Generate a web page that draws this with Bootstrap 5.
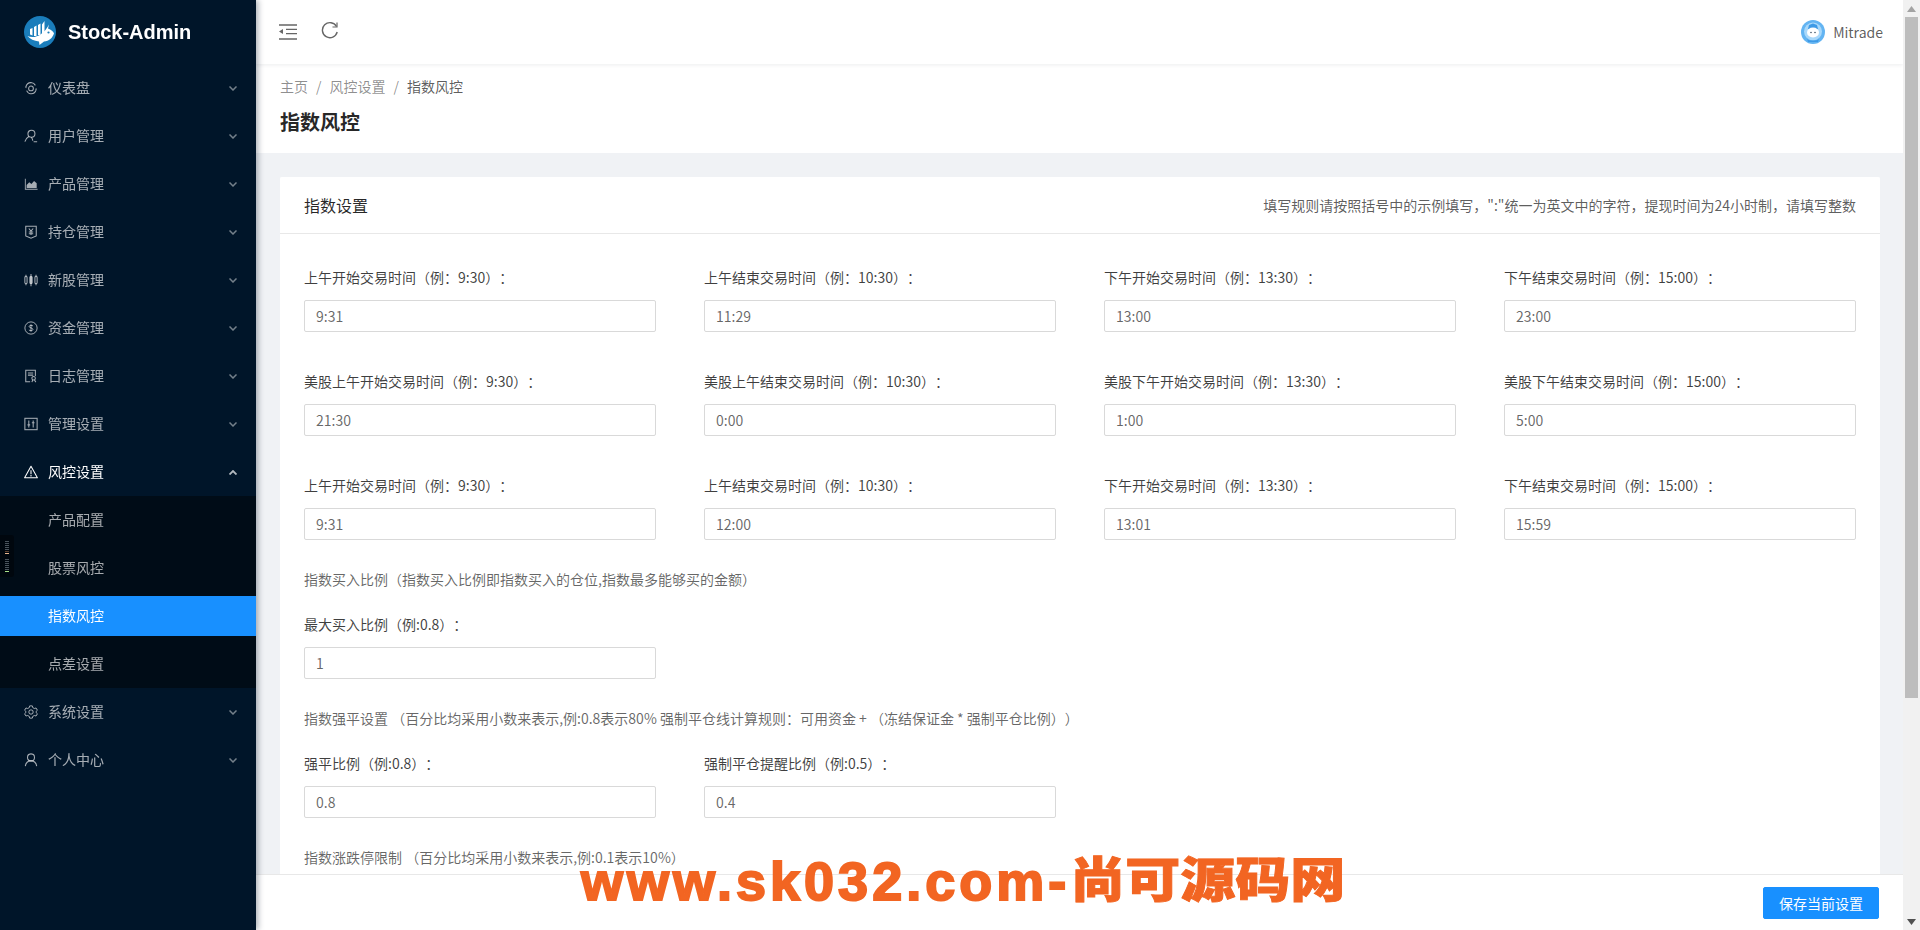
<!DOCTYPE html>
<html lang="zh-CN">
<head>
  <meta charset="UTF-8">
  <title>指数风控 - Stock-Admin</title>
  <link href="https://cdn.jsdelivr.net/npm/bootstrap@5.3.0/dist/css/bootstrap.min.css" rel="stylesheet">
  <style>
    body {
      background: #f0f2f5;
      font-family: "Noto Sans CJK SC", "Liberation Sans", sans-serif;
      font-size: 14px;
      color: rgba(0,0,0,.65);
      text-spacing-trim: space-all;
      overflow: hidden;
    }
    .app-scroll { height: 100vh; overflow-y: auto; scrollbar-width: none; min-width: 0; }
    .bar-rail { width: 17px; height: 100vh; flex-shrink: 0; background: #f1f1f1; }
    .bar-arrow { height: 17px; }
    .bar-thumb { height: 681px; margin: 0 2px; background: #bdbdbd; }
    .side-bar {
      width: 256px;
      height: 100vh;
      flex-shrink: 0;
      background: #001529;
      box-shadow: 2px 0 6px rgba(0,21,41,.35);
      z-index: 20;
    }
    .side-logo { height: 64px; padding-left: 24px; gap: 12px; }
    .side-logo span { font: bold 20px "Liberation Sans", sans-serif; color: #fff; }
    .side-link {
      height: 40px;
      margin: 4px 0;
      padding: 0 19px 0 24px;
      color: rgba(255,255,255,.65);
      line-height: 38px;
    }
    .side-link:hover { color: #fff; }
    .side-ico { width: 14px; height: 14px; margin-right: 10px; flex-shrink: 0; }
    .side-text { flex-grow: 1; padding-bottom: 2px; }
    .side-open { color: #fff; }
    .side-sub { background: #000c17; }
    .side-sub .side-link { padding-left: 48px; }
    .side-sel, .side-sel:hover { background: #1890ff; color: #fff; }
    .side-chev { width: 8px; height: 5px; opacity: .7; }
    .side-meter { position: absolute; left: 0; top: 535px; width: 14px; height: 42px; background: #00070e; border-radius: 0 3px 3px 0; }
    .main-wrap { min-width: 0; }
    .top-bar {
      height: 64px;
      padding: 0 20px 0 23px;
      background: #fff;
      box-shadow: 0 1px 4px rgba(0,21,41,.08);
      position: relative;
      z-index: 5;
    }
    .top-refresh { margin-bottom: 4px; }
    .top-name { margin-left: 8px; }
    .page-head { height: 89px; padding: 10px 24px 0; background: #fff; }
    .page-head .breadcrumb { margin: 0; line-height: 24px; --bs-breadcrumb-divider-color: rgba(0,0,0,.45); --bs-breadcrumb-item-padding-x: 8px; }
    .page-head .breadcrumb-item a { color: rgba(0,0,0,.45); text-decoration: none; }
    .page-head .breadcrumb-item.active { color: rgba(0,0,0,.65); }
    .page-title { margin: 8px 0 0; font-size: 20px; line-height: 32px; font-weight: 600; color: rgba(0,0,0,.85); }
    .page-body { padding: 24px 23px 75px 24px; }
    .set-card { border: 0; border-radius: 2px; }
    .set-card .card-header {
      height: 57px;
      padding: 0 24px;
      background: #fff;
      border-bottom: 1px solid #e8e8e8;
      border-radius: 2px 2px 0 0;
    }
    .set-title { font-size: 16px; color: rgba(0,0,0,.85); }
    .set-card .card-body { padding: 33px 24px 24px; }
    .item-label { display: block; height: 22px; line-height: 20px; margin-bottom: 11px; color: rgba(0,0,0,.75); }
    .item-input {
      height: 32px;
      padding: 4px 11px;
      font-size: 14px;
      color: rgba(0,0,0,.6);
      border: 1px solid #d9d9d9;
      border-radius: 2px;
    }
    .set-row { margin-bottom: 39px; }
    .set-row.tight { margin-bottom: 29px; }
    .set-note { height: 22px; line-height: 20px; margin-bottom: 23px; color: rgba(0,0,0,.6); }
    .foot-bar {
      position: fixed;
      left: 256px;
      right: 17px;
      bottom: 0;
      height: 56px;
      padding-right: 24px;
      background: #fff;
      border-top: 1px solid #e8e8e8;
      z-index: 10;
    }
    .foot-bar .btn {
      height: 32px;
      padding: 0 15px;
      font-size: 14px;
      line-height: 30px;
      background: #1890ff;
      border-color: #1890ff;
      border-radius: 2px;
    }
    .mark-text {
      position: fixed;
      left: 581px;
      top: 839px;
      z-index: 30;
      font: 900 54px/74px "Liberation Sans", "Noto Sans CJK SC", sans-serif;
      color: #f26522;
      letter-spacing: 4px;
      white-space: nowrap;
      -webkit-text-stroke: 2px #f26522;
    }
    .mark-text b { display: inline-block; letter-spacing: 0; font-size: 55px; font-weight: 900; font-family: "Noto Sans CJK SC", sans-serif; transform: scaleY(.86); -webkit-text-stroke: 1px #f26522; }
  </style>
</head>
<body class="d-flex">

<div class="app-scroll flex-grow-1" id="appScroll">
<div class="d-flex">
  <aside class="side-bar sticky-top">
    <div class="side-logo d-flex align-items-center">
      <svg width="32" height="32" viewBox="0 0 32 32">
        <circle cx="16" cy="16" r="16" fill="#1a7dbb"/>
        <path d="M6 13 8.500 12V19.500L6 18.500ZM10 11 12.500 9.500V20H10ZM14 9 16.500 7.500V19H14ZM18 8.500 20.500 5V16L18 18Z" fill="#fff"/>
        <path d="M3.500 20C10 23 19 20 25 8.500L24 12.500C27 13.500 29.500 15.500 30 17.500 28.500 22 25 25 20 25.500L15.500 29 15 25.500C10 25 6 23 3.500 20Z" fill="#fff"/>
        <circle cx="24.500" cy="16.500" r="1.100" fill="#1a7dbb"/>
      </svg>
      <span>Stock-Admin</span>
    </div>
    <nav class="nav flex-column">
      <a class="side-link d-flex align-items-center text-decoration-none" href="#">
        <svg class="side-ico" viewBox="0 0 16 16" fill="none" stroke="currentColor" stroke-width="1.200"><circle cx="8" cy="8.500" r="2.700"/><path d="M2 7C3 3.500 6 1.500 9 2M2.500 6 2 8M14 9.500C13 13 10 15 7 14.500M13.500 10.500 14 8.500M3 11C4.500 14 6 14.500 7.500 14.500M13 5C11.500 2.500 10 2 9 2"/></svg>
        <span class="side-text">仪表盘</span>
        <svg class="side-chev" viewBox="0 0 8 5" fill="none" stroke="currentColor" stroke-width="1.500"><path d="M.5.500 4 4 7.500.5"/></svg>
      </a>
      <a class="side-link d-flex align-items-center text-decoration-none" href="#">
        <svg class="side-ico" viewBox="0 0 16 16" fill="none" stroke="currentColor" stroke-width="1.200"><circle cx="8.500" cy="5.500" r="4"/><path d="M5.500 8.500C3 10 1.500 12 1 14.500M8.500 9.500C9.500 11 10 12.500 10 13.500M11 14.500H15"/></svg>
        <span class="side-text">用户管理</span>
        <svg class="side-chev" viewBox="0 0 8 5" fill="none" stroke="currentColor" stroke-width="1.500"><path d="M.5.500 4 4 7.500.5"/></svg>
      </a>
      <a class="side-link d-flex align-items-center text-decoration-none" href="#">
        <svg class="side-ico" viewBox="0 0 16 16"><path d="M1 2V14.500H15.500V13.500H2V2Z" fill="currentColor"/><path d="M3 12.500V9L6 6 8.500 8 11.500 4.500 14.500 7V12.500Z" fill="currentColor"/></svg>
        <span class="side-text">产品管理</span>
        <svg class="side-chev" viewBox="0 0 8 5" fill="none" stroke="currentColor" stroke-width="1.500"><path d="M.5.500 4 4 7.500.5"/></svg>
      </a>
      <a class="side-link d-flex align-items-center text-decoration-none" href="#">
        <svg class="side-ico" viewBox="0 0 16 16" fill="none" stroke="currentColor" stroke-width="1.200"><path d="M2 1.500H14V12.500L8 15 2 12.500Z"/><path d="M5.500 4 8 7 10.500 4M8 7V11.500M5.500 8H10.500M5.500 10H10.500"/></svg>
        <span class="side-text">持仓管理</span>
        <svg class="side-chev" viewBox="0 0 8 5" fill="none" stroke="currentColor" stroke-width="1.500"><path d="M.5.500 4 4 7.500.5"/></svg>
      </a>
      <a class="side-link d-flex align-items-center text-decoration-none" href="#">
        <svg class="side-ico" viewBox="0 0 16 16" fill="none" stroke="currentColor" stroke-width="1.200"><rect x="1" y="4" width="2.500" height="8" rx="1"/><rect x="6.750" y="4" width="2.500" height="8" rx="1" fill="currentColor"/><rect x="12.500" y="4" width="2.500" height="8" rx="1"/><path d="M2.250 2V4M2.250 12V14M8 1V4M8 12V15M13.750 2V4M13.750 12V14"/></svg>
        <span class="side-text">新股管理</span>
        <svg class="side-chev" viewBox="0 0 8 5" fill="none" stroke="currentColor" stroke-width="1.500"><path d="M.5.500 4 4 7.500.5"/></svg>
      </a>
      <a class="side-link d-flex align-items-center text-decoration-none" href="#">
        <svg class="side-ico" viewBox="0 0 16 16" fill="none" stroke="currentColor" stroke-width="1.100"><circle cx="8" cy="8" r="7"/><path d="M10.300 5.700C9.500 4.800 6 4.500 5.900 6.300 5.800 8.200 10.300 7.600 10.200 9.700 10.100 11.400 6.500 11.300 5.600 10.200M8 3.800V12.200"/></svg>
        <span class="side-text">资金管理</span>
        <svg class="side-chev" viewBox="0 0 8 5" fill="none" stroke="currentColor" stroke-width="1.500"><path d="M.5.500 4 4 7.500.5"/></svg>
      </a>
      <a class="side-link d-flex align-items-center text-decoration-none" href="#">
        <svg class="side-ico" viewBox="0 0 16 16" fill="none" stroke="currentColor" stroke-width="1.200"><path d="M7 14.500H2V1.500H13V8"/><path d="M4.500 4.500H10.500M4.500 7H10.500"/><circle cx="11" cy="10.500" r="2"/><path d="M10 12.500 9 15M12 12.500 13.500 15"/></svg>
        <span class="side-text">日志管理</span>
        <svg class="side-chev" viewBox="0 0 8 5" fill="none" stroke="currentColor" stroke-width="1.500"><path d="M.5.500 4 4 7.500.5"/></svg>
      </a>
      <a class="side-link d-flex align-items-center text-decoration-none" href="#">
        <svg class="side-ico" viewBox="0 0 16 16" fill="none" stroke="currentColor" stroke-width="1.200"><rect x="1" y="1.500" width="14" height="13"/><path d="M5.500 4V12M10.500 4V12M4 9H7M9 6.500H12"/></svg>
        <span class="side-text">管理设置</span>
        <svg class="side-chev" viewBox="0 0 8 5" fill="none" stroke="currentColor" stroke-width="1.500"><path d="M.5.500 4 4 7.500.5"/></svg>
      </a>
      <a class="side-link side-open d-flex align-items-center text-decoration-none" href="#">
        <svg class="side-ico" viewBox="0 0 16 16" fill="none" stroke="currentColor" stroke-width="1.200"><path d="M8 1.500 15.300 14.500H.7Z" stroke-linejoin="round"/><path d="M8 6V10.500M8 11.500V13"/></svg>
        <span class="side-text">风控设置</span>
        <svg class="side-chev" viewBox="0 0 8 5" fill="none" stroke="currentColor" stroke-width="1.800"><path d="M.5 4.500 4 1 7.500 4.500"/></svg>
      </a>
      <div class="side-sub d-flex flex-column">
        <a class="side-link text-decoration-none" href="#">产品配置</a>
        <a class="side-link text-decoration-none" href="#">股票风控</a>
        <a class="side-link side-sel text-decoration-none" href="#">指数风控</a>
        <a class="side-link text-decoration-none" href="#">点差设置</a>
      </div>
      <a class="side-link d-flex align-items-center text-decoration-none" href="#">
        <svg class="side-ico" viewBox="0 0 16 16" fill="none" stroke="currentColor" stroke-width="1.100"><path d="M6.500 1H9.500L10 3 11.800 4 13.800 3.400 15.300 6 13.800 7.400V8.600L15.300 10 13.800 12.600 11.800 12 10 13 9.500 15H6.500L6 13 4.200 12 2.200 12.600.7 10 2.200 8.600V7.400L.7 6 2.200 3.400 4.200 4 6 3Z" stroke-linejoin="round"/><circle cx="8" cy="8" r="2.500"/></svg>
        <span class="side-text">系统设置</span>
        <svg class="side-chev" viewBox="0 0 8 5" fill="none" stroke="currentColor" stroke-width="1.500"><path d="M.5.500 4 4 7.500.5"/></svg>
      </a>
      <a class="side-link d-flex align-items-center text-decoration-none" href="#">
        <svg class="side-ico" viewBox="0 0 16 16" fill="none" stroke="currentColor" stroke-width="1.200"><circle cx="8" cy="5" r="4"/><path d="M1.500 15C2 11.500 4.500 9 8 9S14 11.500 14.500 15"/></svg>
        <span class="side-text">个人中心</span>
        <svg class="side-chev" viewBox="0 0 8 5" fill="none" stroke="currentColor" stroke-width="1.500"><path d="M.5.500 4 4 7.500.5"/></svg>
      </a>
    </nav>
    <div class="side-meter">
      <svg width="14" height="42" viewBox="0 0 14 42">
        <g fill="#4a545c"><rect x="5" y="6" width="4" height="1"/><rect x="5" y="8" width="4" height="1"/><rect x="5" y="10" width="4" height="1"/><rect x="5" y="12" width="4" height="1"/><rect x="5" y="14" width="4" height="1"/><rect x="5" y="24" width="4" height="1"/><rect x="5" y="26" width="4" height="1"/><rect x="5" y="28" width="4" height="1"/><rect x="5" y="30" width="4" height="1"/><rect x="5" y="32" width="4" height="1"/><rect x="5" y="34" width="4" height="1"/></g>
        <rect x="5" y="16" width="4" height="1" fill="#5a4030"/>
        <rect x="5" y="18" width="4" height="1" fill="#e8b48c"/>
        <rect x="5" y="36" width="4" height="1" fill="#a8e088"/>
      </svg>
    </div>
  </aside>

  <div class="main-wrap flex-grow-1">
    <header class="top-bar d-flex align-items-center">
      <svg width="18" height="16" viewBox="0 0 18 16" fill="none" stroke="#666" stroke-width="1.300"><path d="M0 1H18M7 5.300H18M7 9.700H18M0 15H18"/><path d="M0 7.500 4 5V10Z" fill="#666" stroke="none"/></svg>
      <svg class="ms-4 top-refresh" width="18" height="18" viewBox="0 0 18 18" fill="none" stroke="#666" stroke-width="1.400"><path d="M15.500 5.500A7.500 7.500 0 1 0 16.200 11"/><path d="M16 1.500V6H11.500" stroke-width="1.200"/></svg>
      <div class="ms-auto d-flex align-items-center">
        <svg width="24" height="24" viewBox="0 0 24 24">
          <circle cx="12" cy="12" r="12" fill="#63b4f2"/>
          <circle cx="12" cy="11.500" r="9" fill="#a9d8fa"/>
          <path d="M8 5 12 3.500 16 5 17 9H7Z" fill="#3e9ae6"/>
          <ellipse cx="12" cy="12.500" rx="6" ry="5" fill="#fff"/>
          <circle cx="10" cy="12.500" r=".8" fill="#44566a"/>
          <circle cx="14" cy="12.500" r=".8" fill="#44566a"/>
          <path d="M6 19C8 21 16 21 18 19L17 22H7Z" fill="#3e9ae6"/>
        </svg>
        <span class="top-name">Mitrade</span>
      </div>
    </header>

    <div class="page-head">
      <ol class="breadcrumb">
        <li class="breadcrumb-item"><a href="#">主页</a></li>
        <li class="breadcrumb-item"><a href="#">风控设置</a></li>
        <li class="breadcrumb-item active">指数风控</li>
      </ol>
      <h1 class="page-title">指数风控</h1>
    </div>

    <div class="page-body">
      <div class="card set-card">
        <div class="card-header d-flex align-items-center justify-content-between">
          <span class="set-title">指数设置</span>
          <span>填写规则请按照括号中的示例填写，":"统一为英文中的字符，提现时间为24小时制，请填写整数</span>
        </div>
        <div class="card-body">
          <div class="row gx-5 set-row">
            <div class="col-3"><label class="item-label">上午开始交易时间（例：9:30）：</label><input class="form-control item-input" value="9:31"></div>
            <div class="col-3"><label class="item-label">上午结束交易时间（例：10:30）：</label><input class="form-control item-input" value="11:29"></div>
            <div class="col-3"><label class="item-label">下午开始交易时间（例：13:30）：</label><input class="form-control item-input" value="13:00"></div>
            <div class="col-3"><label class="item-label">下午结束交易时间（例：15:00）：</label><input class="form-control item-input" value="23:00"></div>
          </div>
          <div class="row gx-5 set-row">
            <div class="col-3"><label class="item-label">美股上午开始交易时间（例：9:30）：</label><input class="form-control item-input" value="21:30"></div>
            <div class="col-3"><label class="item-label">美股上午结束交易时间（例：10:30）：</label><input class="form-control item-input" value="0:00"></div>
            <div class="col-3"><label class="item-label">美股下午开始交易时间（例：13:30）：</label><input class="form-control item-input" value="1:00"></div>
            <div class="col-3"><label class="item-label">美股下午结束交易时间（例：15:00）：</label><input class="form-control item-input" value="5:00"></div>
          </div>
          <div class="row gx-5 set-row tight">
            <div class="col-3"><label class="item-label">上午开始交易时间（例：9:30）：</label><input class="form-control item-input" value="9:31"></div>
            <div class="col-3"><label class="item-label">上午结束交易时间（例：10:30）：</label><input class="form-control item-input" value="12:00"></div>
            <div class="col-3"><label class="item-label">下午开始交易时间（例：13:30）：</label><input class="form-control item-input" value="13:01"></div>
            <div class="col-3"><label class="item-label">下午结束交易时间（例：15:00）：</label><input class="form-control item-input" value="15:59"></div>
          </div>
          <div class="set-note">指数买入比例（指数买入比例即指数买入的仓位,指数最多能够买的金额）</div>
          <div class="row gx-5 set-row tight">
            <div class="col-3"><label class="item-label">最大买入比例（例:0.8）：</label><input class="form-control item-input" value="1"></div>
          </div>
          <div class="set-note">指数强平设置 （百分比均采用小数来表示,例:0.8表示80% 强制平仓线计算规则：可用资金 + （冻结保证金 * 强制平仓比例））</div>
          <div class="row gx-5 set-row tight">
            <div class="col-3"><label class="item-label">强平比例（例:0.8）：</label><input class="form-control item-input" value="0.8"></div>
            <div class="col-3"><label class="item-label">强制平仓提醒比例（例:0.5）：</label><input class="form-control item-input" value="0.4"></div>
          </div>
          <div class="set-note">指数涨跌停限制 （百分比均采用小数来表示,例:0.1表示10%）</div>
          <div class="row gx-5 set-row tight">
            <div class="col-3"><label class="item-label">最大涨跌幅（例:0.1）：</label><input class="form-control item-input" value="0.1"></div>
          </div>
          <div class="set-note">指数手续费设置 （百分比均采用小数来表示）</div>
          <div class="row gx-5 set-row tight">
            <div class="col-3"><label class="item-label">买入手续费（例:0.001）：</label><input class="form-control item-input" value="0.001"></div>
          </div>
        </div>
      </div>
    </div>
  </div>
</div>
</div>

<div class="bar-rail d-flex flex-column">
  <div class="bar-arrow d-flex align-items-center justify-content-center">
    <svg width="9" height="6" viewBox="0 0 9 6"><path d="M4.500 0 9 6H0Z" fill="#a3a3a3"/></svg>
  </div>
  <div class="bar-thumb" id="barThumb"></div>
  <div class="flex-grow-1"></div>
  <div class="bar-arrow d-flex align-items-center justify-content-center">
    <svg width="9" height="6" viewBox="0 0 9 6"><path d="M0 0H9L4.500 6Z" fill="#505050"/></svg>
  </div>
</div>

<footer class="foot-bar d-flex align-items-center justify-content-end">
  <button class="btn btn-primary" type="button">保存当前设置</button>
</footer>
<div class="mark-text">www.sk032.com-<b>尚可源码网</b></div>

<script src="https://cdn.jsdelivr.net/npm/bootstrap@5.3.0/dist/js/bootstrap.bundle.min.js"></script>
<script>
  // the drawn scrollbar follows the real scroll position
  const appScroll = document.getElementById("appScroll");
  const barThumb = document.getElementById("barThumb");
  appScroll.addEventListener("scroll", () => {
    const room = 896 - barThumb.offsetHeight;
    const range = appScroll.scrollHeight - appScroll.clientHeight;
    barThumb.style.marginTop = (appScroll.scrollTop / range * room) + "px";
  });
</script>
</body>
</html>
